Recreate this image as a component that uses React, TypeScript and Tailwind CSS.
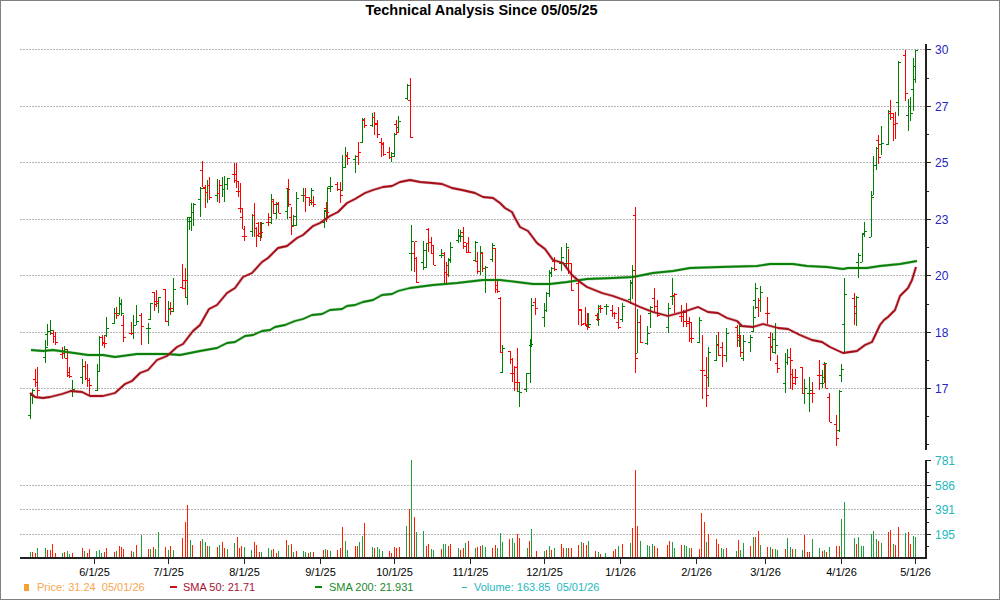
const G: number[][] = [
[30,394,419,415,395],[32,389,404,395,390],[45,340,363,357,347],[47,324,346,334,331],[50,320,335,331,330],[64,346,358,353,349],[72,380,397,390,389],[82,359,384,377,366],[97,364,391,390,371],[99,336,372,371,337],[106,317,337,335,328],[114,308,324,323,313],[119,297,315,313,303],[121,299,316,304,313],[133,315,339,333,325],[136,305,325,325,321],[148,323,344,328,328],[150,303,320,319,303],[158,297,313,303,297],[168,301,326,321,308],
[173,278,312,311,289],[187,217,305,297,217],[189,217,230,221,217],[191,203,231,221,212],[193,203,226,212,204],[200,187,217,199,188],[207,180,203,192,185],[217,179,202,195,193],[222,177,197,185,189],[224,176,202,189,184],[227,178,190,184,178],[252,214,237,231,215],[261,222,238,236,223],[271,194,224,222,199],[276,202,219,213,204],[287,188,219,211,189],[293,215,227,225,216],[296,192,226,225,198],[303,188,202,195,195],[311,188,205,202,190],[324,210,228,222,210],[327,187,217,211,188],[330,177,192,186,186],[342,155,191,190,167],[345,147,168,167,155],[355,155,173,159,156],[362,118,143,142,119],[372,113,127,125,117],[391,152,162,157,153],[394,133,157,156,134],[398,116,133,127,121],[407,84,100,98,85],
[411,225,271,253,241],[423,241,270,262,250],[426,243,268,267,243],[441,249,258,255,255],[448,258,277,265,259],[450,242,263,260,247],[458,229,243,240,235],[460,230,242,236,236],[475,241,261,260,242],[480,246,275,271,252],[485,266,293,268,267],[492,243,262,259,245],[502,345,373,372,348],[519,382,407,391,392],[526,373,392,389,373],[530,339,383,373,344],[531,298,347,345,305],[544,303,327,317,310],[546,292,312,310,293],[549,270,297,293,272],[551,267,277,273,268],[561,247,271,263,257],[566,243,268,263,247],[588,313,327,326,324],[598,305,326,319,306],[606,304,315,306,306],[622,303,322,319,306],[630,280,304,299,282],[632,265,299,283,270],[637,309,353,353,322],[647,326,345,343,333],[650,306,328,313,307],[668,303,333,327,308],[672,278,305,296,296],[699,317,343,342,320],[708,347,387,377,352],[716,335,361,360,344],[726,328,362,355,333],[739,325,347,340,326],[743,335,361,358,341],[750,335,352,342,337],[753,306,332,331,317],[755,283,309,300,288],[760,286,312,300,292],[772,333,353,347,339],[775,323,354,352,345],[785,353,393,383,362],[787,349,365,362,357],[804,379,404,393,388],[809,377,412,393,390],[822,370,388,383,377],[824,362,383,383,363],[839,390,432,430,391],[841,364,382,375,369],[844,278,353,324,294],[856,296,326,313,297],[858,253,278,262,255],[862,233,262,262,233],[864,222,237,234,231],[871,191,237,237,197],[873,156,195,195,165],[876,147,170,165,148],[881,126,155,144,143],[888,110,145,144,111],[898,61,116,102,62],[908,99,131,115,106],[910,97,121,106,113],[913,58,111,89,66],[915,50,83,79,50],
];
const R: number[][] = [
[35,369,387,379,382],[37,367,396,382,390],[53,330,343,333,336],[55,332,345,336,342],[62,347,359,354,353],[67,349,377,358,375],[69,367,378,372,376],[85,361,380,366,378],[87,364,387,378,380],[89,378,395,380,385],[102,335,346,337,343],[104,336,348,342,343],[116,307,319,313,315],[123,315,342,325,337],[131,322,335,333,333],[141,313,345,315,326],[154,292,311,292,304],[156,290,307,301,301],[165,289,322,289,321],[170,302,315,309,308],
[182,264,289,287,280],[185,268,297,288,280],[202,161,187,170,187],[205,185,208,188,192],[209,177,200,185,197],[219,180,203,193,185],[234,163,183,174,180],[236,163,188,174,181],[238,182,197,191,191],[240,183,213,208,208],[242,208,229,217,229],[244,226,241,236,236],[254,203,237,215,228],[256,227,247,228,235],[258,222,237,223,233],[260,222,241,233,232],[268,213,226,222,217],[273,199,214,201,204],[278,202,213,203,213],[288,179,207,188,204],[291,207,235,217,226],[305,188,212,195,197],[309,197,206,197,200],[313,196,207,202,204],[326,202,222,208,212],[337,182,191,184,189],[340,182,203,189,195],[347,152,165,156,158],[358,142,165,156,152],[364,118,128,120,125],[374,112,135,117,123],[377,120,138,124,134],[381,138,157,142,144],[383,142,156,143,154],[389,147,159,152,157],[396,120,135,124,132],[410,78,138,100,137],
[414,242,272,253,241],[416,257,283,258,282],[428,228,252,229,242],[431,237,253,242,245],[433,245,265,253,265],[444,252,283,253,272],[446,262,285,272,274],[463,227,249,232,242],[466,243,253,246,252],[468,237,253,243,252],[477,252,274,261,271],[482,252,272,253,268],[495,248,293,248,289],[497,279,293,285,291],[500,297,353,298,352],[510,351,364,351,359],[512,358,382,373,373],[514,366,391,373,382],[517,348,391,367,382],[535,298,315,302,308],[554,257,271,261,269],[568,249,274,263,263],[571,263,291,263,290],[578,282,325,283,309],[581,309,326,310,324],[585,307,326,323,324],[587,313,330,325,327],[597,313,321,315,319],[600,305,313,308,308],[612,305,317,310,313],[614,312,319,313,313],[618,307,329,322,327],[635,207,373,215,358],[640,315,343,322,342],[654,288,313,298,306],[657,300,317,306,315],[674,293,313,295,294],[681,305,322,316,316],[683,310,327,316,321],[686,303,327,312,321],[689,317,342,323,322],[691,322,343,338,338],[702,335,399,370,370],[706,357,407,375,395],[718,332,356,345,355],[722,342,367,347,355],[737,325,347,327,335],[740,335,357,337,352],[758,298,317,307,300],[767,297,324,313,313],[770,332,361,337,346],[777,355,373,363,368],[790,348,389,357,360],[792,369,390,374,383],[795,369,385,377,377],[802,367,393,367,393],[812,382,403,393,393],[819,360,390,375,375],[825,364,388,364,388],[829,393,422,397,422],[836,415,446,424,438],[854,293,325,298,306],[878,135,164,140,157],[890,100,120,113,113],[893,113,141,117,124],[895,112,139,124,123],[905,50,101,55,93],
];
const sma50 = "30,393 35,397 43,398 50,397 62,394 71,391 82,392 90,396 103,396 115,393 125,384 132,381 140,373 148,370 157,360 167,356 177,347 183,344 193,331 200,325 209,309 217,305 227,293 235,288 243,277 252,273 262,262 268,258 278,248 287,246 297,238 303,235 313,226 320,223 330,216 338,212 347,203 355,199 365,193 373,190 383,187 392,186 400,182 410,180 420,182 432,183 442,184 452,188 462,190 475,193 483,197 493,198 500,203 505,208 512,212 515,218 520,227 528,231 537,243 545,249 553,260 563,263 572,275 580,282 587,287 602,293 613,296 627,301 640,307 653,312 668,316 683,312 698,307 708,312 718,313 727,318 737,321 742,326 753,327 763,324 778,328 788,329 800,335 812,340 822,342 830,347 843,353 857,351 865,345 872,342 880,325 884,320 888,317 895,310 900,296 908,288 912,280 916,267";
const sma200 = "31,350 43,351 53,350 67,352 88,355 103,355 115,357 137,354 167,354 180,355 200,351 217,348 227,343 235,342 245,336 253,335 262,331 270,330 275,327 285,325 295,321 303,319 312,315 322,314 330,310 342,309 347,306 355,305 363,302 373,300 382,295 392,294 398,291 410,288 433,285 457,283 483,280 500,280 517,282 533,284 550,284 567,282 587,279 613,278 633,277 653,273 673,271 690,268 720,267 757,266 770,264 793,264 807,266 827,267 843,269 848,268 867,268 880,266 900,264 917,261";
const volA: [number, number, number][] = [
[91,337,1],[97,337,0],[106,340,0],[112,325,1],[136,325,1],[142,330,0],[151,330,0],[157,313,0],[166,340,0],[187,340,1],[193,337,0],[202,334,1],[208,342,1],[217,340,0],[247,325,0],[253,334,1],[262,340,0],[268,328,0],[289,334,1],[298,331,1],[304,340,1],[313,337,0],[319,325,0],[343,337,0],[349,334,1],[358,319,0],[364,322,0],[370,328,0],[394,334,0],[400,337,1],[409,316,0],[424,286,1],[445,328,0],[451,328,1],[460,322,0],[466,328,1],[475,277,1],[496,322,0],[505,331,1],[511,319,0],[520,331,1],[547,295,0],[556,247,0],[562,196,0],[571,301,1],[577,316,0],[601,304,0],[607,298,1],[616,307,1],[622,319,0],[628,319,1],[652,322,0],[658,316,1],[667,307,0],[673,325,0],[682,328,1],[703,310,1],[712,292,0],[718,325,0],[724,319,0],[733,322,1],[754,331,1],[763,307,0],[769,316,0],[778,337,0],[784,337,1],[805,325,1],[814,331,1],[820,328,0],[829,340,0],[835,334,1],[859,301,0],[865,316,1],[874,313,0],[880,337,1],[889,334,0],[910,334,1],[916,337,1],[925,340,0],[931,337,1],[940,337,0],[970,331,0],[976,328,1],[982,331,0],[991,334,1],[1012,331,0],[1021,325,0],[1027,262,0],[1036,304,1],[1042,331,1],[1066,319,0],[1072,319,0],[1078,307,1],[1087,289,1],[1093,250,0],[1117,322,1],[1123,325,0],[1132,322,1],[1138,328,1],[1147,334,1],[1168,334,0],[1174,340,0],[1183,322,0],[1189,325,0],[1198,322,0],[1219,259,1],[1228,208,0],[1234,60,1],[1243,232,0],[1249,277,1],[1270,274,1],[1279,319,0],[1285,313,0],[1294,328,1],[1300,331,1],[1324,328,0],[1330,313,1],[1336,313,1],[1345,319,0],[1351,313,0],[1375,325,1],[1381,331,0],[1390,325,0],[1396,310,1],[1405,304,0],[1426,325,1],[1432,322,0],[1441,319,0],[1447,316,1],[1456,322,1],[1477,325,0],[1486,316,0],[1492,325,1],
];
const volB: [number, number, number][] = [
[0,280,1],[6,307,1],[28,298,0],[37,295,1],[43,310,1],[52,283,0],[58,295,0],[82,325,1],[88,304,0],[94,268,1],[109,334,0],[133,334,1],[139,331,0],[148,319,1],[154,331,0],[163,325,1],[184,313,0],[190,325,0],[199,325,1],[205,325,0],[214,325,0],[235,316,0],[244,307,1],[250,310,0],[259,316,0],[265,304,1],[286,334,0],[295,337,1],[301,343,0],[316,340,1],[340,334,0],[346,328,0],[355,319,1],[367,313,0],[391,310,1],[397,265,0],[406,91,0],[412,259,0],[421,304,1],[442,316,1],[448,319,1],[457,313,1],[463,319,0],[472,325,0],[502,316,0],[508,304,0],[517,307,1],[523,325,1],[544,316,0],[553,316,1],[559,319,1],[568,325,1],[574,325,0],[598,328,0],[604,220,0],[613,247,0],[619,307,1],[625,283,0],[649,298,0],[655,313,0],[664,325,1],[670,328,1],[679,325,0],[709,334,1],[715,301,0],[721,331,1],[730,310,1],[751,319,0],[760,292,1],[766,292,0],[775,274,0],[781,316,1],[802,322,0],[811,322,1],[817,328,0],[826,328,1],[832,331,1],[856,328,0],[862,295,1],[871,322,1],[877,328,0],[886,328,1],[907,331,1],[913,286,0],[922,337,0],[928,337,0],[937,298,1],[958,325,1],[967,334,0],[973,331,1],[979,337,0],[988,322,1],[1009,319,0],[1018,319,0],[1024,238,1],[1033,187,1],[1063,295,1],[1069,313,0],[1075,292,1],[1084,319,1],[1090,319,1],[1114,283,1],[1120,274,1],[1129,298,1],[1135,304,0],[1144,310,1],[1165,277,0],[1171,271,0],[1180,313,1],[1186,316,0],[1195,262,0],[1216,280,1],[1225,277,0],[1231,313,0],[1240,289,1],[1246,292,1],
];
const vols = [
  ...volA.map(([z, y, g]) => ({ x: Math.floor(z / 3), top: 440 + y / 3, g })),
  ...volB.map(([z, y, g]) => ({ x: 500 + Math.floor(z / 3), top: 440 + y / 3, g })),
];
const barPath = (rows: number[][]) =>
  rows.map(([x, t, b, o, c]) => `M${x + 0.5} ${t}V${b}M${x - 2} ${o + 0.5}H${x}M${x + 1} ${c + 0.5}H${x + 3}`).join("");
const volPath = (g: number) =>
  vols.filter((v) => v.g === g).map((v) => `M${v.x + 0.5} ${v.top.toFixed(0)}V558`).join("");
const priceGrid = [49.5, 106.5, 162.5, 219.5, 275.5, 332.5, 388.5];
const priceLabels = ["30", "27", "25", "23", "20", "18", "17"];
const volGrid = [485.5, 509.5, 534.5];
const dates: [number, string][] = [[94,"6/1/25"],[168,"7/1/25"],[244,"8/1/25"],[320,"9/1/25"],[394,"10/1/25"],[470,"11/1/25"],[544,"12/1/25"],[620,"1/1/26"],[696,"2/1/26"],[765,"3/1/26"],[841,"4/1/26"],[915,"5/1/26"]];
const minorY = [78, 134.5, 191, 247.5, 304, 360.5, 416.5, 444.5];
const minorV = [472.5, 497.5, 522, 546];

export default function App() {
  return (
    <div className="flex h-[600px] w-[1000px] flex-col border border-[#808080] bg-white font-['Liberation_Sans',Arial,sans-serif]">
      <div className="flex h-[17px] items-center justify-center pr-[37px] pt-[1px] text-[14.5px] font-bold leading-none text-black">
        Technical Analysis Since 05/05/25
      </div>
      <svg width="998" height="560" viewBox="1 18 998 560" className="block" fontFamily="'Liberation Sans', Arial, sans-serif">
        <g stroke="#b4b4b4" strokeDasharray="2 1" strokeWidth="1" shapeRendering="crispEdges">
          {[...priceGrid, ...volGrid].map((y) => (
            <path key={y} d={`M20 ${y}H925`} />
          ))}
        </g>
        <g strokeWidth="1" shapeRendering="crispEdges" fill="none">
          <path d={volPath(1)} stroke="#1ea03c" />
          <path d={volPath(0)} stroke="#ff2000" />
          <path d={barPath(G)} stroke="#008000" />
          <path d={barPath(R)} stroke="#ff0000" />
        </g>
        <polyline points={sma200} fill="none" stroke="#0a800a" strokeOpacity="0.3" strokeWidth="3" strokeLinejoin="round" />
        <polyline points={sma200} fill="none" stroke="#0a800a" strokeWidth="1.8" strokeLinejoin="round" />
        <polyline points={sma50} fill="none" stroke="#a50f19" strokeOpacity="0.3" strokeWidth="3" strokeLinejoin="round" />
        <polyline points={sma50} fill="none" stroke="#a50f19" strokeWidth="1.8" strokeLinejoin="round" />
        <g stroke="#222" shapeRendering="crispEdges" fill="none">
          <path d="M925.5 44V450M925.5 460V559" strokeWidth="2" />
          <path d="M20 558H927" strokeWidth="2" />
          {priceGrid.map((y) => <path key={y} d={`M926 ${y}H931`} strokeWidth="1" />)}
          {minorY.map((y) => <path key={y} d={`M926 ${Math.floor(y) + 0.5}H929`} strokeWidth="1" />)}
          {[460.5, ...volGrid].map((y) => <path key={y} d={`M926 ${y}H931`} strokeWidth="1" />)}
          {minorV.map((y) => <path key={y} d={`M926 ${Math.floor(y) + 0.5}H929`} strokeWidth="1" />)}
          {dates.map(([x]) => <path key={x} d={`M${x + 0.5} 558V564`} strokeWidth="1" />)}
        </g>
        <g fontSize="12" fill="#2424c0">
          {priceGrid.map((y, i) => (
            <text key={y} x="935" y={y + 4.5}>{priceLabels[i]}</text>
          ))}
        </g>
        <g fontSize="12" fill="#22b8c0">
          <text x="935" y="464.5">781</text>
          <text x="935" y="489.5">586</text>
          <text x="935" y="514">391</text>
          <text x="935" y="539">195</text>
        </g>
        <g fontSize="11" fill="#000" textAnchor="middle">
          {dates.map(([x, t]) => (
            <text key={x} x={x + 0.5} y="575.5">{t}</text>
          ))}
        </g>
      </svg>
      <div className="flex h-[20px] items-center pb-[2px] pl-[23px] text-[11px] leading-none whitespace-pre">
        <div className="flex w-[146px] items-center">
          <span className="h-[7px] w-[5px] bg-[#f5a033]" />
          <span className="ml-[8px] text-[#f7a650]">Price: 31.24  05/01/26</span>
        </div>
        <div className="flex w-[145px] items-center">
          <span className="h-[2px] w-[7px] bg-[#c8101e]" />
          <span className="ml-[6px] text-[#a81030]">SMA 50: 21.71</span>
        </div>
        <div className="flex w-[147px] items-center">
          <span className="h-[2px] w-[7px] bg-[#0a8a0a]" />
          <span className="ml-[7px] text-[#1a8a2a]">SMA 200: 21.931</span>
        </div>
        <div className="flex items-center">
          <span className="h-[1px] w-[5px] bg-[#20b8c0]" />
          <span className="ml-[7px] text-[#22b8c0]">Volume: 163.85  05/01/26</span>
        </div>
      </div>
    </div>
  );
}
